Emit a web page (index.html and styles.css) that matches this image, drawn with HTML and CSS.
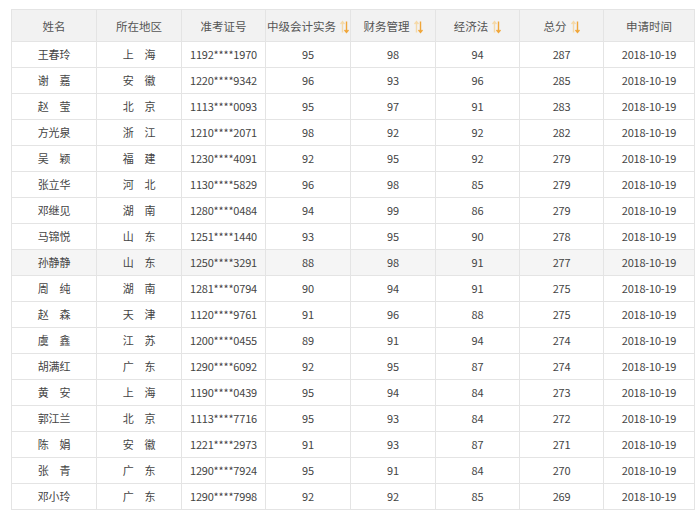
FILE: index.html
```html
<!DOCTYPE html>
<html lang="zh">
<head>
<meta charset="utf-8">
<link rel="stylesheet" href="styles.css">
</head>
<body>
<table class="grid">
  <colgroup>
    <col class="c1"><col class="c2"><col class="c3"><col class="c4"><col class="c5"><col class="c6"><col class="c7"><col class="c8">
  </colgroup>
  <thead>
    <tr>
      <th>姓名</th>
      <th>所在地区</th>
      <th>准考证号</th>
      <th>中级会计实务<svg class="sort" viewBox="0 0 9 14"><path d="M2.5 1.5V12.5M0.5 4L2.5 1.5L4.5 4" stroke="#f5d9a8" stroke-width="1.4" fill="none"/><path d="M6.5 1.5V12.5M4.5 10L6.5 12.5L8.5 10" stroke="#f0a63a" stroke-width="1.4" fill="none"/></svg></th>
      <th>财务管理<svg class="sort" viewBox="0 0 9 14"><path d="M2.5 1.5V12.5M0.5 4L2.5 1.5L4.5 4" stroke="#f5d9a8" stroke-width="1.4" fill="none"/><path d="M6.5 1.5V12.5M4.5 10L6.5 12.5L8.5 10" stroke="#f0a63a" stroke-width="1.4" fill="none"/></svg></th>
      <th>经济法<svg class="sort" viewBox="0 0 9 14"><path d="M2.5 1.5V12.5M0.5 4L2.5 1.5L4.5 4" stroke="#f5d9a8" stroke-width="1.4" fill="none"/><path d="M6.5 1.5V12.5M4.5 10L6.5 12.5L8.5 10" stroke="#f0a63a" stroke-width="1.4" fill="none"/></svg></th>
      <th>总分<svg class="sort" viewBox="0 0 9 14"><path d="M2.5 1.5V12.5M0.5 4L2.5 1.5L4.5 4" stroke="#f5d9a8" stroke-width="1.4" fill="none"/><path d="M6.5 1.5V12.5M4.5 10L6.5 12.5L8.5 10" stroke="#f0a63a" stroke-width="1.4" fill="none"/></svg></th>
      <th>申请时间</th>
    </tr>
  </thead>
  <tbody>
    <tr><td>王春玲</td><td>上　海</td><td>1192****1970</td><td>95</td><td>98</td><td>94</td><td>287</td><td>2018-10-19</td></tr>
    <tr><td>谢　嘉</td><td>安　徽</td><td>1220****9342</td><td>96</td><td>93</td><td>96</td><td>285</td><td>2018-10-19</td></tr>
    <tr><td>赵　莹</td><td>北　京</td><td>1113****0093</td><td>95</td><td>97</td><td>91</td><td>283</td><td>2018-10-19</td></tr>
    <tr><td>方光泉</td><td>浙　江</td><td>1210****2071</td><td>98</td><td>92</td><td>92</td><td>282</td><td>2018-10-19</td></tr>
    <tr><td>吴　颖</td><td>福　建</td><td>1230****4091</td><td>92</td><td>95</td><td>92</td><td>279</td><td>2018-10-19</td></tr>
    <tr><td>张立华</td><td>河　北</td><td>1130****5829</td><td>96</td><td>98</td><td>85</td><td>279</td><td>2018-10-19</td></tr>
    <tr><td>邓继见</td><td>湖　南</td><td>1280****0484</td><td>94</td><td>99</td><td>86</td><td>279</td><td>2018-10-19</td></tr>
    <tr><td>马锦悦</td><td>山　东</td><td>1251****1440</td><td>93</td><td>95</td><td>90</td><td>278</td><td>2018-10-19</td></tr>
    <tr class="hl"><td>孙静静</td><td>山　东</td><td>1250****3291</td><td>88</td><td>98</td><td>91</td><td>277</td><td>2018-10-19</td></tr>
    <tr><td>周　纯</td><td>湖　南</td><td>1281****0794</td><td>90</td><td>94</td><td>91</td><td>275</td><td>2018-10-19</td></tr>
    <tr><td>赵　森</td><td>天　津</td><td>1120****9761</td><td>91</td><td>96</td><td>88</td><td>275</td><td>2018-10-19</td></tr>
    <tr><td>虞　鑫</td><td>江　苏</td><td>1200****0455</td><td>89</td><td>91</td><td>94</td><td>274</td><td>2018-10-19</td></tr>
    <tr><td>胡满红</td><td>广　东</td><td>1290****6092</td><td>92</td><td>95</td><td>87</td><td>274</td><td>2018-10-19</td></tr>
    <tr><td>黄　安</td><td>上　海</td><td>1190****0439</td><td>95</td><td>94</td><td>84</td><td>273</td><td>2018-10-19</td></tr>
    <tr><td>郭江兰</td><td>北　京</td><td>1113****7716</td><td>95</td><td>93</td><td>84</td><td>272</td><td>2018-10-19</td></tr>
    <tr><td>陈　娟</td><td>安　徽</td><td>1221****2973</td><td>91</td><td>93</td><td>87</td><td>271</td><td>2018-10-19</td></tr>
    <tr><td>张　青</td><td>广　东</td><td>1290****7924</td><td>95</td><td>91</td><td>84</td><td>270</td><td>2018-10-19</td></tr>
    <tr><td>邓小玲</td><td>广　东</td><td>1290****7998</td><td>92</td><td>92</td><td>85</td><td>269</td><td>2018-10-19</td></tr>
  </tbody>
</table>
</body>
</html>
```
FILE: styles.css
```css
html, body {
  margin: 0;
  background: #ffffff;
}
body {
  padding: 9px 0 0 11px;
  font-family: "Noto Sans CJK SC", "Noto Sans", sans-serif;
  color: #444444;
}
.grid {
  border-collapse: collapse;
  table-layout: fixed;
  width: 683px;
  font-size: 11px;
}
.c1, .c2, .c4, .c5 { width: 85px; }
.c3, .c6, .c7 { width: 84px; }
.c8 { width: 91px; }
.grid th, .grid td {
  border: 1px solid #e4e4e4;
  text-align: center;
  padding: 0;
  white-space: nowrap;
  overflow: hidden;
}
.grid th {
  height: 31px;
  background: #f2f2f2;
  font-weight: normal;
  color: #555555;
  font-size: 11.5px;
}
.grid td {
  height: 25px;
  line-height: 25px;
  letter-spacing: -0.2px;
}
.grid tr.hl td {
  background: #f5f5f5;
}
.sort {
  width: 9px;
  height: 14px;
  margin-left: 4px;
  vertical-align: -3px;
}
```
